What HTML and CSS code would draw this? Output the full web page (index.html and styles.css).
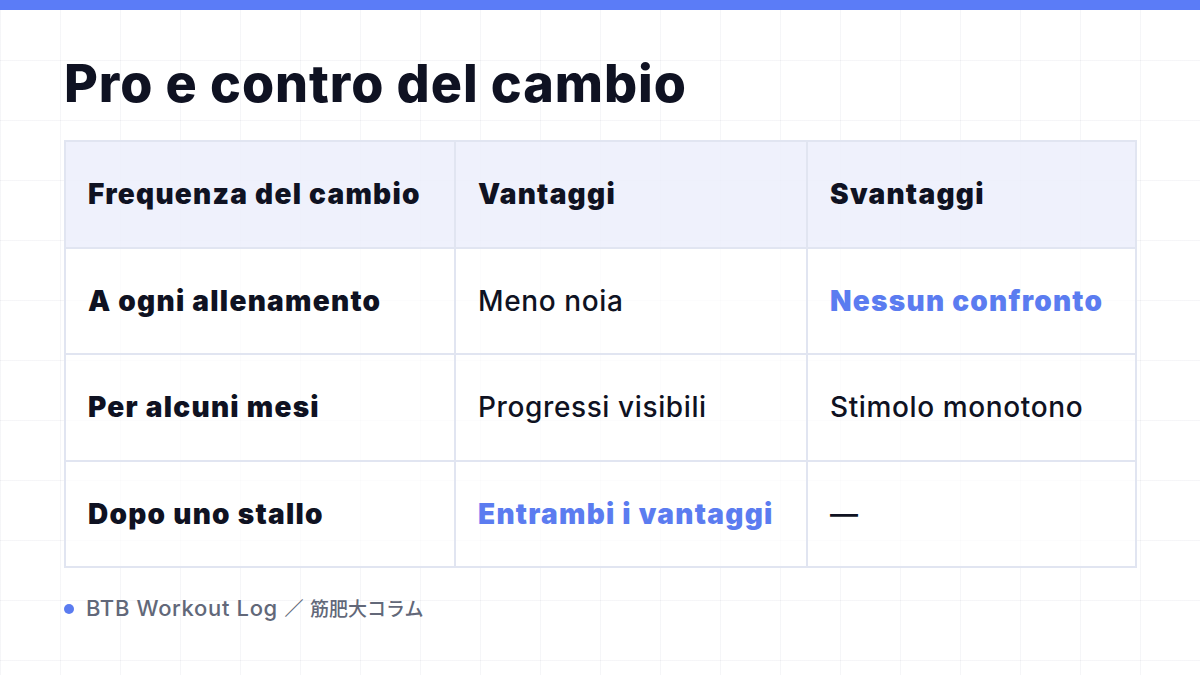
FILE: index.html
```html
<!DOCTYPE html>
<html lang="it">
<head>
<meta charset="utf-8">
<link rel="stylesheet" href="styles.css">
</head>
<body>
<div class="topbar"></div>
<main class="slide">
  <h1 class="title">Pro e contro del cambio</h1>
  <table class="grid">
    <colgroup>
      <col class="c1"><col class="c2"><col class="c3">
    </colgroup>
    <thead>
      <tr><th>Frequenza del cambio</th><th>Vantaggi</th><th>Svantaggi</th></tr>
    </thead>
    <tbody>
      <tr><th>A ogni allenamento</th><td>Meno noia</td><td class="accent">Nessun confronto</td></tr>
      <tr><th>Per alcuni mesi</th><td>Progressi visibili</td><td>Stimolo monotono</td></tr>
      <tr><th>Dopo uno stallo</th><td class="accent">Entrambi i vantaggi</td><td>—</td></tr>
    </tbody>
  </table>
  <footer class="foot"><span class="dot"></span><span class="foot-text">BTB Workout Log <span class="sep">／</span> <span class="jp">筋肥大コラム</span></span></footer>
</main>
</body>
</html>
```

FILE: styles.css
```css
* { box-sizing: border-box; }
html, body { margin: 0; padding: 0; }
body {
  width: 1200px;
  height: 675px;
  overflow: hidden;
  background-color: #ffffff;
  background-image:
    linear-gradient(to right, rgba(30, 40, 90, 0.045) 1px, transparent 1px),
    linear-gradient(to bottom, rgba(30, 40, 90, 0.045) 1px, transparent 1px);
  background-size: 60px 60px;
  background-position: 0 0;
  font-family: Inter, "Noto Sans CJK JP", sans-serif;
  color: #0f1222;
}
.topbar { height: 10px; background: #5b7cf7; }
.slide { padding: 0 64px 0 64px; }
.title {
  margin: 0;
  padding-top: 39px;
  height: 130px;
  font-size: 52px;
  font-weight: 800;
  letter-spacing: 0.018em;
  line-height: 70px;
  color: #0f1222;
}
.grid {
  width: 1071px;
  border-collapse: collapse;
  table-layout: fixed;
}
.c1 { width: 390px; }
.c2 { width: 352px; }
.c3 { width: 329px; }
.grid th, .grid td {
  border: 2px solid #e1e5f1;
  height: 106.5px;
  padding: 0 0 0 22px;
  text-align: left;
  vertical-align: middle;
  font-size: 28px;
  line-height: 34px;
  white-space: nowrap;
}
.grid th { font-weight: 900; letter-spacing: 0.045em; }
.grid td { font-weight: 500; letter-spacing: 0.022em; }
.grid thead th { background: rgba(236, 239, 251, 0.85); }
.grid tbody th, .grid tbody td { background: rgba(255, 255, 255, 0.7); }
.grid .accent { color: #5b7cf0; font-weight: 900; letter-spacing: 0.045em; }
.foot {
  display: flex;
  align-items: center;
  gap: 12px;
  margin-top: 26px;
}
.dot { width: 10px; height: 10px; border-radius: 50%; background: #5b7cf0; }
.foot-text { font-size: 22px; line-height: 28px; color: #626879; font-weight: 500; letter-spacing: 0.03em; }
.sep { font-size: 19px; letter-spacing: 0; font-weight: 700; }
.jp { font-size: 19px; letter-spacing: 0; }
```
